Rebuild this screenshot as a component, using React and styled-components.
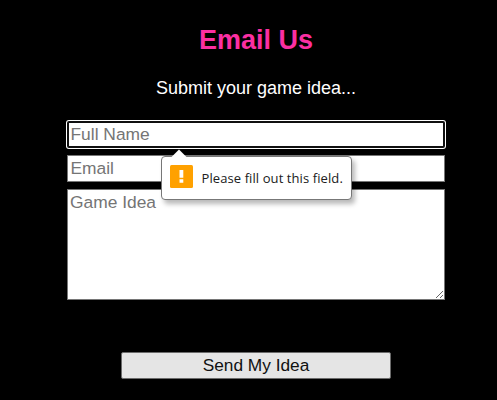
import React from "react";
import styled, { createGlobalStyle, css } from "styled-components";

const GlobalStyle = createGlobalStyle`
  *, *::before, *::after { box-sizing: border-box; }
  body { margin: 0; background: #000; overflow: hidden; }
`;

const Page = styled.main`
  display: flex;
  flex-direction: column;
  align-items: center;
  height: 400px;
  padding: 23px 0 0 15px;
  background: #000;
  color: #fff;
  font-family: "Liberation Sans", Arial, sans-serif;
`;

const Title = styled.h2`
  margin: 0;
  font-size: 27px;
  line-height: 34px;
  font-weight: 700;
  color: #fb2fa2;
`;

const Intro = styled.p`
  margin: 18px 0 0;
  font-size: 18px;
  line-height: 26px;
`;

const Form = styled.form`
  display: flex;
  flex-direction: column;
  align-items: center;
  width: 378px;
  margin-top: 20px;
`;

const fieldStyle = css`
  display: block;
  width: 100%;
  margin: 0;
  border: 1px solid #767676;
  border-radius: 0;
  background: #fff;
  color: #000;
  font: 17.4px/20px "Liberation Sans", Arial, sans-serif;
  &::placeholder { color: #757575; opacity: 1; }
`;

const FieldWrap = styled.div`
  position: relative;
  width: 100%;
`;

const Input = styled.input`
  ${fieldStyle}
  height: 27px;
  padding: 1px 2.5px;
  outline: none;
  ${({ $active }) => $active && css`
    border: 2px solid #101010;
    border-radius: 2px;
    padding: 0 1.5px;
    box-shadow: 0 0 0 1px #fff;
  `}
`;

const Email = styled(Input)`
  margin-top: 7px;
`;

const TextArea = styled.textarea`
  ${fieldStyle}
  height: 111px;
  margin-top: 7px;
  padding: 2px;
  resize: both;
`;

const Submit = styled.button`
  width: 270px;
  height: 27px;
  margin-top: 52px;
  padding: 0 0 2px;
  border: 1px solid #6b6b6b;
  border-radius: 2px;
  background: #e5e5e5;
  color: #111;
  font: 17.3px/20px "Liberation Sans", Arial, sans-serif;
`;

const Tooltip = styled.div`
  position: absolute;
  top: 35px;
  left: 94px;
  z-index: 1;
  display: flex;
  align-items: center;
  gap: 8.5px;
  width: 191px;
  height: 44px;
  padding: 0 8px 3px;
  border: 1px solid #777;
  border-radius: 4px;
  background: #fff;
  color: #202020;
  box-shadow: 3px 4px 5px rgba(0, 0, 0, 0.28);
`;

const Arrow = styled.svg`
  position: absolute;
  top: -8px;
  left: 9px;
`;

const Message = styled.span`
  padding-top: 3px;
  font: 13px/20px "Open Sans", "Noto Sans", sans-serif;
  letter-spacing: 0.09px;
  white-space: nowrap;
`;

function WarningIcon() {
  return (
    <svg width="23" height="23" viewBox="0 0 23 23" aria-hidden="true">
      <rect width="23" height="23" rx="1.5" fill="#ffa100" />
      <path d="M9.5 5h3.8v7.7H9.5zM9.5 14.2h3.8V17.7H9.5z" fill="#fff" />
    </svg>
  );
}

export default function App() {
  return (
    <>
      <GlobalStyle />
      <Page>
        <Title>Email Us</Title>
        <Intro>Submit your game idea...</Intro>
        <Form noValidate onSubmit={(e) => e.preventDefault()}>
          <FieldWrap>
            <Input $active placeholder="Full Name" />
            <Tooltip role="alert">
              <Arrow width="16" height="9" viewBox="0 0 16 9" aria-hidden="true">
                <path d="M0 8.5L8 0.5L16 8.5V9H0z" fill="#fff" />
              </Arrow>
              <WarningIcon />
              <Message>Please fill out this field.</Message>
            </Tooltip>
          </FieldWrap>
          <Email type="email" placeholder="Email" />
          <TextArea placeholder="Game Idea" />
          <Submit type="submit">Send My Idea</Submit>
        </Form>
      </Page>
    </>
  );
}
